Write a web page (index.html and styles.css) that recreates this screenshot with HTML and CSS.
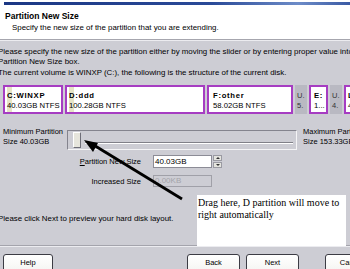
FILE: index.html
```html
<!DOCTYPE html>
<html>
<head>
<meta charset="utf-8">
<link rel="stylesheet" href="styles.css">
</head>
<body>
<div class="header">
  <div class="bar"></div>
  <div class="title">Partition New Size</div>
  <div class="subtitle">Specify the new size of the partition that you are extending.</div>
</div>
<div class="content">
  <p class="p1">Please specify the new size of the partition either by moving the slider or by entering proper value into the<br>Partition New Size box.</p>
  <p class="p2">The current volume is WINXP (C:), the following is the structure of the current disk.</p>
  <div class="disk">
    <div class="part used w-c"><b>C:WINXP</b><span>40.03GB NTFS</span></div>
    <div class="part used w-d"><b>D:ddd</b><span>100.28GB NTFS</span></div>
    <div class="part w-f"><b>F:other</b><span>58.02GB NTFS</span></div>
    <div class="unalloc"><span>U.</span><span>5.</span></div>
    <div class="part w-e"><b>E:</b><span>1...</span></div>
    <div class="unalloc"><span>U.</span><span>4.</span></div>
    <div class="part w-l"><b>L:</b><span>4...</span></div>
  </div>
  <div class="slider-row">
    <div class="minlabel">Minimum Partition<br>Size 40.03GB</div>
    <div class="slider">
      <div class="thumb"></div>
      <div class="track"></div>
    </div>
    <div class="maxlabel">Maximum Partition<br>Size 153.33GB</div>
  </div>
  <div class="field-row first">
    <div class="flabel"><u>P</u>artition New Size</div>
    <div class="input">40.03GB</div>
    <div class="spin"><div class="sb up"></div><div class="sb down"></div></div>
  </div>
  <div class="field-row second">
    <div class="flabel">Increased Size</div>
    <div class="input disabled">0.00KB</div>
  </div>
  <p class="p3">Please click Next to preview your hard disk layout.</p>
  <div class="sep"></div>
  <div class="footer">
    <div class="btn help">Help</div>
    <div class="btn back">Back</div>
    <div class="btn next">Next</div>
    <div class="btn cancel">Cancel</div>
  </div>
</div>
<div class="callout">Drag here, D partition will move to right automatically</div>
<svg class="arrow" width="350" height="269" viewBox="0 0 350 269">
  <line x1="182" y1="199" x2="92" y2="144" stroke="#000" stroke-width="2.8"/>
  <polygon points="84,140 98,143 93,152" fill="#000"/>
</svg>
</body>
</html>
```
FILE: styles.css
```css
html, body {
  margin: 0;
  padding: 0;
}
body {
  width: 350px;
  height: 269px;
  overflow: hidden;
  position: relative;
  background: #cdcdd4;
  font-family: "Liberation Sans", Arial, sans-serif;
  font-size: 7.5px;
  color: #000;
}
.header {
  background: #fff;
  height: 39px;
  overflow: hidden;
  border-bottom: 1px solid #a6a6ae;
  box-shadow: 0 1px 0 #ececf0;
}
.bar {
  margin: 2px 0 0 4px;
  height: 3px;
  background: linear-gradient(to right, #1b3784 0%, #2a4a98 60%, #6d8cc8 85%, #3a5aa4 100%);
}
.title {
  margin: 6px 0 0 5px;
  font-weight: bold;
  font-size: 8.5px;
  line-height: 10px;
}
.subtitle {
  margin: 2px 0 0 12px;
  line-height: 10px;
  font-size: 7.9px;
  white-space: nowrap;
}
.content {
  padding-top: 1px;
}
p {
  margin: 0;
  white-space: nowrap;
  line-height: 10px;
  font-size: 7.9px;
}
.p1 {
  margin: 6px 0 0 -2px;
}
.p2 {
  margin: 1px 0 0 -2px;
}
.disk {
  display: flex;
  gap: 2px;
  margin: 7px 0 0 3px;
  height: 29px;
  overflow: visible;
}
.part {
  box-sizing: border-box;
  height: 29px;
  border: 2px solid #a63dc2;
  background: #fff;
  padding: 4px 0 0 2px;
  display: flex;
  flex-direction: column;
  line-height: 10px;
  font-size: 7.7px;
  white-space: nowrap;
  overflow: hidden;
  flex: none;
}
.part b {
  letter-spacing: 0.7px;
}
.part.used {
  background: linear-gradient(to right, #fff 2px, #e6e4c6 2px, #e6e4c6 7px, #fff 7px);
}
.w-c { width: 60px; }
.w-d { width: 140px; }
.w-f { width: 86px; padding-left: 4px; }
.w-e { width: 19px; padding-left: 3px; }
.w-l { width: 30px; padding-left: 2px; }
.unalloc {
  flex: none;
  box-sizing: border-box;
  width: 12px;
  height: 29px;
  background: #b9b9c2;
  padding: 6px 0 0 2px;
  display: flex;
  flex-direction: column;
  line-height: 10px;
  color: #333;
}
.slider-row {
  display: flex;
  margin-top: 13px;
  line-height: 10px;
}
.minlabel {
  width: 64px;
  padding-left: 3px;
  flex: none;
  white-space: nowrap;
}
.slider {
  flex: none;
  box-sizing: border-box;
  width: 230px;
  height: 20px;
  margin-top: 3px;
  border-top: 1px solid #84848e;
  border-left: 1px solid #84848e;
  border-right: 1px solid #f4f4f6;
  border-bottom: 1px solid #f4f4f6;
  padding: 1px 0 0 5px;
  display: flex;
  align-items: flex-start;
}
.thumb {
  flex: none;
  box-sizing: border-box;
  width: 8px;
  height: 16px;
  background: #e6e5dc;
  border-top: 1px solid #fff;
  border-left: 1px solid #fff;
  border-right: 1px solid #6e6e78;
  border-bottom: 1px solid #6e6e78;
}
.track {
  flex: 1;
  height: 0;
  margin: 10px 3px 0 4px;
  border-top: 1px solid #808088;
  border-bottom: 1px solid #fff;
}
.maxlabel {
  margin-left: 6px;
  white-space: nowrap;
}
.field-row {
  display: flex;
  align-items: center;
}
.field-row.first {
  margin-top: 5px;
}
.field-row.second {
  margin-top: 7px;
}
.flabel {
  width: 141px;
  text-align: right;
  flex: none;
  white-space: nowrap;
}
.input {
  flex: none;
  box-sizing: border-box;
  width: 59px;
  height: 13px;
  margin-left: 12px;
  background: #fff;
  border: 1px solid #8c8c96;
  padding-left: 1px;
  font-size: 8px;
  line-height: 11px;
}
.input.disabled {
  height: 12px;
  background: #cdcdd4;
  border-color: #a0a0a8;
  color: #a4a4aa;
  line-height: 10px;
}
.spin {
  flex: none;
  width: 9px;
  height: 13px;
  margin-left: 1px;
  display: flex;
  flex-direction: column;
  gap: 1px;
}
.sb {
  flex: 1;
  box-sizing: border-box;
  background: #e4e4de;
  border: 1px solid #9a9aa2;
  position: relative;
}
.sb::after {
  content: "";
  position: absolute;
  left: 2px;
  top: 1px;
  border-left: 2px solid transparent;
  border-right: 2px solid transparent;
}
.sb.up::after {
  border-bottom: 2px solid #333;
}
.sb.down::after {
  border-top: 2px solid #333;
}
.p3 {
  margin: 27px 0 0 -2px;
}
.sep {
  margin-top: 21px;
  height: 0;
  border-top: 1px solid #a4a4ac;
  border-bottom: 1px solid #ececf0;
}
.footer {
  display: flex;
  margin-top: 7px;
}
.btn {
  flex: none;
  box-sizing: border-box;
  height: 23px;
  width: 53px;
  border: 1px solid #3c3c44;
  border-radius: 3px;
  background: linear-gradient(#ffffff, #f2f2ee);
  text-align: center;
  padding-top: 3px;
  line-height: 10px;
}
.help { margin-left: 3px; width: 50px; }
.back { margin-left: 134px; }
.next { margin-left: 6px; }
.cancel { margin-left: 26px; }
.callout {
  position: absolute;
  left: 197px;
  top: 195px;
  width: 149px;
  height: 51px;
  box-sizing: border-box;
  background: #fff;
  padding: 2px 2px 0 1px;
  font-family: "Liberation Serif", "Times New Roman", serif;
  font-size: 10px;
  line-height: 12px;
}
.arrow {
  position: absolute;
  left: 0;
  top: 0;
}
```
